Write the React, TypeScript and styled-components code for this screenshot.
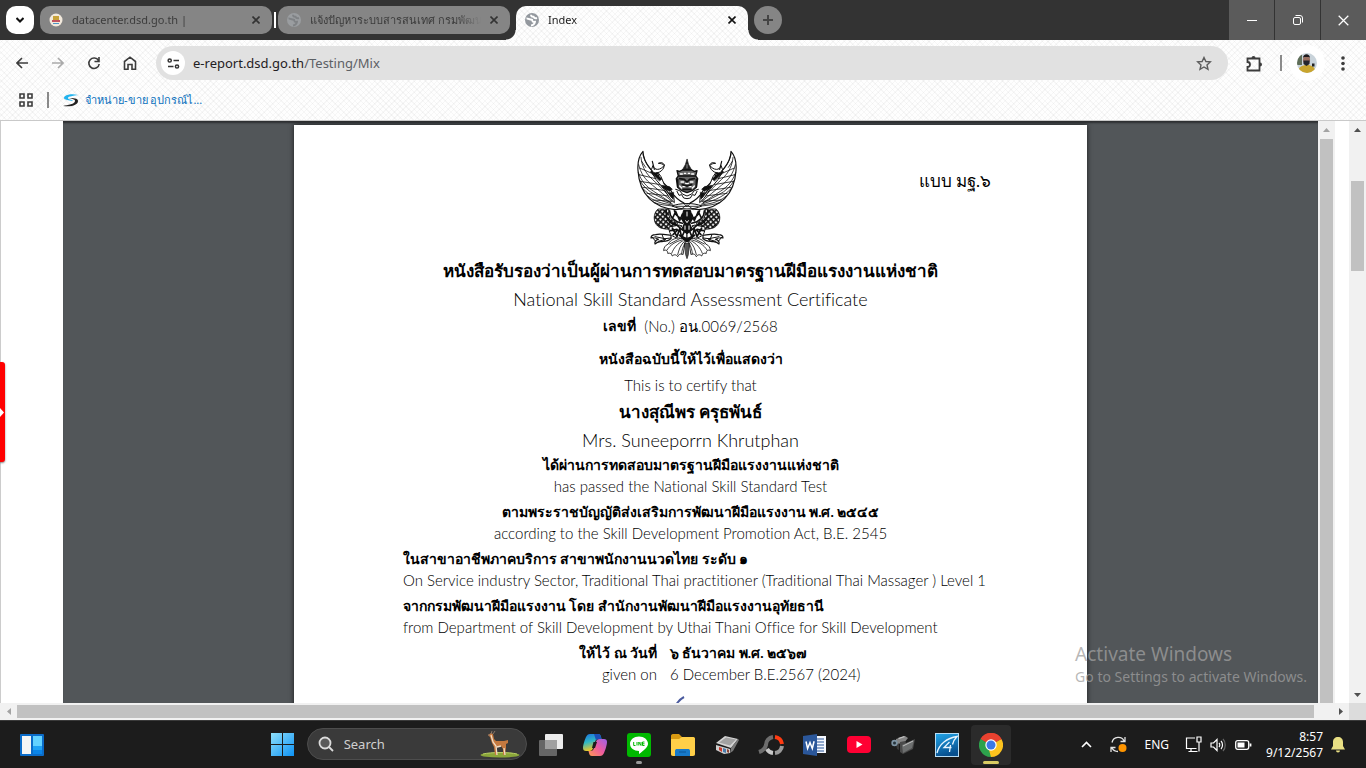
import React from 'react';
import styled, { createGlobalStyle } from 'styled-components';

const ui = `'Noto Sans', 'Open Sans', sans-serif`;
const weave = `
  background-color: #fefefe;
  background-image:
    repeating-linear-gradient(45deg, rgba(0,0,0,.03) 0 1px, transparent 1px 4px),
    repeating-linear-gradient(-45deg, rgba(0,0,0,.03) 0 1px, transparent 1px 4px);
`;

const GlobalStyle = createGlobalStyle`
  * { box-sizing: border-box; }
  body { margin: 0; background: #fff; font-family: ${ui}; }
  button { border: 0; padding: 0; background: none; font: inherit; color: inherit; }
  svg { display: block; flex: none; }
`;

const Desktop = styled.div`
  height: 100vh;
  display: flex;
  flex-direction: column;
  position: relative;
  overflow: hidden;
`;

/* ---------- tab strip ---------- */
const TabStrip = styled.header`
  height: 40px;
  flex: none;
  display: flex;
  align-items: flex-start;
  background: #333;
  padding-left: 6px;
`;
const TabSearch = styled.button`
  width: 28px;
  height: 28px;
  margin: 6px 6px 0 0;
  border-radius: 10px;
  background: #fff;
  display: grid;
  place-items: center;
`;
const Tab = styled.div<{ $active?: boolean }>`
  position: relative;
  width: 232px;
  height: ${p => (p.$active ? 34 : 28)}px;
  margin-top: 6px;
  margin-left: ${p => (p.$active ? 6 : 0)}px;
  padding: ${p => (p.$active ? '0 12px 6px 9px' : '0 12px 0 9px')};
  display: flex;
  align-items: center;
  gap: 9px;
  font-size: 11px;
  line-height: 18px;
  color: ${p => (p.$active ? '#1c1c1c' : '#3c3c3c')};
  border-radius: ${p => (p.$active ? '10px 10px 0 0' : '10px')};
  ${p => (p.$active ? weave : 'background: #858585;')}
`;
const TabFlare = styled.span<{ $side: 'left' | 'right' }>`
  position: absolute;
  bottom: 0;
  ${p => p.$side}: -10px;
  width: 10px;
  height: 10px;
  background: radial-gradient(circle at ${p => (p.$side === 'left' ? '0 0' : '100% 0')}, transparent 9px, #fdfdfd 10px);
`;
const TabTitle = styled.span`
  flex: 1;
  min-width: 0;
  overflow: hidden;
  white-space: nowrap;
  mask-image: linear-gradient(90deg, #000 85%, transparent);
`;
const TabDivider = styled.span`
  width: 2px;
  height: 16px;
  margin: 12px 2px 0;
  background: #fff;
`;
const NewTab = styled.button`
  width: 28px;
  height: 28px;
  margin: 6px 0 0 6px;
  border-radius: 50%;
  background: #858585;
  display: grid;
  place-items: center;
`;
const WindowControls = styled.div`
  margin-left: auto;
  display: flex;
  gap: 1px;
`;
const WindowButton = styled.button`
  width: 45px;
  height: 40px;
  background: #5b5b5b;
  display: grid;
  place-items: center;
`;

/* ---------- toolbar ---------- */
const Toolbar = styled.div`
  ${weave}
  height: 80px;
  flex: none;
  display: flex;
  flex-direction: column;
`;
const NavRow = styled.nav`
  height: 46px;
  display: flex;
  align-items: center;
  padding: 0 5px 0 4px;
`;
const NavButton = styled.button`
  width: 36px;
  height: 36px;
  display: grid;
  place-items: center;
`;
const Omnibox = styled.label`
  flex: 1;
  height: 34px;
  margin: 0 8px;
  padding: 0 16px 0 5px;
  border-radius: 17px;
  background: #e1e1e1;
  display: flex;
  align-items: center;
  gap: 8px;
`;
const SiteInfo = styled.button`
  width: 24px;
  height: 24px;
  border-radius: 50%;
  background: #fff;
  display: grid;
  place-items: center;
`;
const Address = styled.div`
  flex: 1;
  display: flex;
  font-size: 13px;
  line-height: 20px;
  color: #5c6064;
`;
const Host = styled.span`
  color: #1f2023;
`;
const Bar = styled.span`
  width: 2px;
  height: 16px;
  background: #8a8a8a;
  flex: none;
`;
const Profile = styled.div`
  display: flex;
  align-items: center;
  gap: 7px;
  padding-left: 8px;
`;
const Avatar = styled.button`
  width: 36px;
  height: 36px;
  border-radius: 50%;
  background: #fff;
  display: grid;
  place-items: center;
`;
const BookmarkRow = styled.div`
  height: 34px;
  display: flex;
  align-items: center;
  padding: 0 19px 6px;
  gap: 14px;
`;
const Bookmark = styled.a`
  display: flex;
  align-items: center;
  gap: 6px;
  font-size: 11px;
  line-height: 16px;
  color: #0a70bd;
  text-decoration: none;
`;

/* ---------- page ---------- */
const Page = styled.main`
  flex: 1;
  min-height: 0;
  display: flex;
  position: relative;
  border-top: 1px solid #c9c9c9;
  background: #fff;
`;
const PageEdge = styled.div`
  width: 63px;
  flex: none;
  border-left: 1px solid #ccc;
`;
const Viewer = styled.section`
  flex: 1;
  min-width: 0;
  overflow: hidden;
  background: #525659;
  box-shadow: inset 0 3px 2px -1px #2d2f31;
  padding-top: 4px;
  display: flex;
  justify-content: center;
`;
const Paper = styled.article`
  width: 793px;
  min-height: 1122px;
  flex: none;
  background: #fff;
  box-shadow: 0 0 5px rgba(0, 0, 0, .7);
  color: #000;
  font-family: Lato, 'Noto Sans', sans-serif;
  font-variant-ligatures: none;
`;
const PaperHead = styled.div`
  display: grid;
  grid-template-columns: 1fr 100px 1fr;
  align-items: start;
  padding: 25px 96px 0 89px;
  height: 132px;
`;
const FormCode = styled.div`
  grid-column: 3;
  text-align: right;
  padding-top: 18px;
  font-size: 17px;
  line-height: 26px;
`;
const EmblemBox = styled.div`
  grid-column: 2;
`;
const Line = styled.p<{ $size?: 'big' | 'mid'; $bold?: boolean; $left?: boolean }>`
  margin: 0;
  white-space: nowrap;
  text-align: ${p => (p.$left ? 'left' : 'center')};
  padding-left: ${p => (p.$left ? 109 : 0)}px;
  font-weight: ${p => (p.$bold ? 700 : 300)};
  font-size: ${p => (p.$size === 'big' ? (p.$bold ? 17 : 18) : p.$bold ? 14 : 15)}px;
  line-height: ${p => (p.$size === 'big' ? 28 : p.$size === 'mid' ? 26 : p.$bold ? 22 : 20)}px;
`;
const NumberLine = styled.div`
  display: flex;
  justify-content: center;
  gap: 8px;
  margin-bottom: 7px;
`;
const Pair = styled.div`
  margin-bottom: 5px;
`;
const DateGrid = styled.div`
  display: grid;
  grid-template-columns: 363px 1fr;
  column-gap: 13px;
  & > :nth-child(odd) { text-align: right; }
  & > :nth-child(even) { text-align: left; }
`;
const Signature = styled.div`
  padding: 12px 0 0 377px;
`;
const SideTab = styled.button`
  position: absolute;
  left: 0;
  top: 241px;
  width: 5px;
  height: 100px;
  border-radius: 0 3px 3px 0;
  background: #f00;
  box-shadow: 0 1px 2px rgba(0, 0, 0, .5);
  display: grid;
  place-items: center start;
`;
const VScroll = styled.div`
  width: 17px;
  flex: none;
  background: #f1f1f1;
  display: flex;
  flex-direction: column;
  align-items: center;
  padding-top: 7px;
`;
const VThumb = styled.div<{ $top: number; $size?: number }>`
  width: 13px;
  margin-top: ${p => p.$top}px;
  background: #c1c1c1;
  ${p => (p.$size ? `height: ${p.$size}px; margin-bottom: auto;` : 'flex: 1;')}
`;
const DownArrow = styled.div`
  padding-bottom: 6px;
`;
const Gutter = styled.div`
  width: 14px;
  flex: none;
`;
const HScroll = styled.div`
  height: 17px;
  flex: none;
  display: flex;
  align-items: center;
  background: #f1f1f1;
`;
const HArrow = styled.div`
  width: 17px;
  display: grid;
  place-items: center;
`;
const HThumb = styled.div`
  flex: 1;
  height: 13px;
  margin-right: 18px;
  background: #c1c1c1;
`;
const Corner = styled.div`
  width: 17px;
  height: 17px;
  background: #dcdcdc;
`;
const Watermark = styled.aside`
  position: absolute;
  right: 59px;
  bottom: 81px;
  color: rgba(160, 160, 160, .75);
  font-size: 14px;
  line-height: 20px;
  pointer-events: none;
`;
const WatermarkTitle = styled.div`
  font-size: 19px;
  line-height: 26px;
`;

/* ---------- taskbar ---------- */
const Taskbar = styled.footer`
  height: 48px;
  flex: none;
  display: grid;
  grid-template-columns: 17fr auto 23fr;
  align-items: center;
  background: #1c1c1c;
  border-top: 1px solid #3a3a3a;
  color: #fff;
`;
const Widgets = styled.button`
  width: 24px;
  margin-left: 20px;
`;
const Apps = styled.div`
  display: flex;
  gap: 4px;
`;
const AppButton = styled.button<{ $active?: boolean }>`
  position: relative;
  width: 40px;
  height: 40px;
  border-radius: 4px;
  display: grid;
  place-items: center;
  background: ${p => (p.$active ? '#2b2b2b' : 'transparent')};
`;
const Running = styled.span<{ $active?: boolean }>`
  position: absolute;
  bottom: 1px;
  left: 50%;
  transform: translateX(-50%);
  width: ${p => (p.$active ? 16 : 6)}px;
  height: 3px;
  border-radius: 2px;
  background: ${p => (p.$active ? '#d9cb63' : '#9a9a9a')};
`;
const SearchBox = styled.label`
  width: 220px;
  height: 32px;
  margin-top: 3px;
  border-radius: 16px;
  border: 1px solid #4d4d4d;
  background: #3a3a3a;
  display: flex;
  align-items: center;
  padding: 0 6px 0 10px;
`;
const SearchInput = styled.input`
  flex: 1;
  min-width: 0;
  margin-left: 8px;
  border: 0;
  outline: 0;
  background: transparent;
  font: 13px ${ui};
  &::placeholder { color: #cfcfcf; opacity: 1; }
`;
const Tray = styled.div`
  display: flex;
  align-items: center;
  justify-content: flex-end;
  padding-right: 21px;
  font-size: 12px;
  line-height: 16px;
`;
const TrayItem = styled.button<{ $gap: number }>`
  margin-right: ${p => p.$gap}px;
`;
const Clock = styled.div`
  text-align: right;
  margin-right: 8px;
`;

/* ---------- drawings ---------- */
const Cross = ({ color, size = 8 }: { color: string; size?: number }) => (
  <svg width={size} height={size} viewBox="0 0 8 8" stroke={color} strokeWidth={size > 8 ? 0.9 : 1.6}>
    <path d="M.5 .5l7 7M7.5 .5l-7 7" />
  </svg>
);
const Globe = ({ tone, land = '#fff' }: { tone: string; land?: string }) => (
  <svg width="14" height="14" viewBox="0 0 14 14">
    <circle cx="7" cy="7" r="7" fill={tone} />
    <path d="M1.500 5.500C3 5.200 4 6.800 6 6.500c1 0 1.500.5 1.500 1.500s1.500 1 2.500.8c0 1.700-2 3.500-4 3.700M6 1.800c0 1.700 1 2 2.500 1.900C9 5 10.500 5.500 12 5" fill="none" stroke={land} strokeWidth="1.900" />
  </svg>
);
const Triangle = ({ dir, color }: { dir: 'up' | 'down' | 'left' | 'right'; color: string }) => {
  const d = { up: 'M0 4L3.500 0L7 4z', down: 'M0 0h7L3.500 4z', left: 'M4 0v7L0 3.500z', right: 'M0 0v7l4-3.500z' }[dir];
  const flat = dir === 'up' || dir === 'down';
  return (
    <svg width={flat ? 7 : 4} height={flat ? 4 : 7} fill={color}>
      <path d={d} />
    </svg>
  );
};

const Wing = () => (
  <g>
    <path d="M70 34C59 46 53 66 55 92c2 30 12 62 34 84 18 18 44 30 78 33l32-4-6-16c-22-10-32-24-42-38-18-24-44-46-60-66C82 74 70 54 70 34z" fill="#fff" strokeWidth="3.500" />
    <path d="M64 52c2 24 12 46 34 66s40 40 62 62M57 74c6 26 20 46 42 62 20 16 38 32 58 48M56 98c8 24 24 42 46 56 18 12 34 22 52 34M61 122c10 18 26 32 46 42 16 8 30 16 46 24M70 146c12 14 28 24 46 32 14 6 28 10 42 14M84 168c14 12 30 18 46 22l44 8M104 188c16 6 34 8 56 10M70 42c4 20 12 36 30 54M78 82l-12-18M92 98L60 84M108 116L58 104M122 134L62 124M138 152L70 142M148 168L82 160M158 184L100 180" strokeWidth="2.400" />
    {/* raised arm with the curled hand */}
    <path d="M96 94l18 2 10 14 10 24 14 8 14 24 2 22-14-14-18-28-22-26z" fill="#fff" strokeWidth="3" />
    <path d="M92 96l16-8 8 6-4 10 14 14-6 4zM126 136l24 4 8 8-8 6-20-10zM148 158l12 20 2-20z" fill="#111" strokeWidth="2" />
    <path d="M100 78c4 14 22 14 34-2-6-4-10-6-18-6 8-4 14-2 18 4 0 14-14 28-32 24l-6-8z" fill="#fff" strokeWidth="3" />
    <path d="M98 64l6 24M106 102l18 14M112 98l6 10M136 146l20 26" strokeWidth="3.500" />
  </g>
);
const LowerSide = () => (
  <g>
    <path d="M114 208c-14 12-14 38 0 50 10 10 30 10 52 10l8-20c-22-6-30-22-26-40z" fill="url(#scales)" strokeWidth="2.500" />
    <path d="M140 210c-4 26 10 46 46 48M150 212c0 18 14 32 38 38M164 212c2 12 10 20 26 26M160 232l8-18 12 28 8-20" fill="none" strokeWidth="4.500" />
    <path d="M148 262c0 12 2 20 10 26l18 8 26-2v-22l-22-16z" fill="#fff" strokeWidth="3" />
    <path d="M158 264l14 26 8-24 6 26 10-22M166 250l20 18M152 272l20-4M160 284l14-14" strokeWidth="5" fill="none" />
    <path d="M154 286c-16-2-34-6-46-2-8 0-14 4-14 10 10-2 16 0 22 4-8 2-12 8-10 14 8-8 14-6 24-8 8 0 18-2 24-8z" fill="#fff" strokeWidth="3.500" />
    <path d="M106 290l30 6 18-2M116 304l22-6M98 292l10 12M128 286l6 16" strokeWidth="3" fill="none" />
    <path d="M176 294c-18 2-26 10-30 18-10 4-14 12-14 20 8-4 12 0 12 8 8-2 12 2 14 8 6-6 12-4 16 2 4-8 10-10 16-6l8-46z" fill="#fff" strokeWidth="2.600" />
    <path d="M186 300c-20 6-34 14-44 30M190 302c-18 10-28 22-34 38M194 304c-12 12-16 24-20 40M180 296l-30 16M196 308c-6 12-10 24-10 34" strokeWidth="2.400" fill="none" />
  </g>
);
const Emblem = () => (
  <svg width="100" height="110" viewBox="52 30 300 330" fill="none" stroke="#111" strokeLinecap="round" strokeLinejoin="round" role="img" aria-label="Garuda emblem">
    <defs>
      <pattern id="scales" width="11" height="11" patternUnits="userSpaceOnUse" patternTransform="rotate(40)">
        <rect width="11" height="11" fill="#111" stroke="none" />
        <rect x="2" y="2" width="6" height="6" fill="#fff" stroke="none" />
      </pattern>
    </defs>
    <LowerSide />
    <g transform="translate(404 0) scale(-1 1)"><LowerSide /></g>
    <path d="M196 310h12l-2 34-4 12-4-12z" fill="#555" strokeWidth="2" />
    <Wing />
    <g transform="translate(404 0) scale(-1 1)"><Wing /></g>
    <path d="M158 198c22-10 66-10 88 0-22 12-66 12-88 0z" fill="#fff" strokeWidth="3" />
    <path d="M168 199h68M192 190l10 10 10-10M184 208l18-14 18 14" strokeWidth="2.500" />
    <path d="M192 212h20l6 24-8 14 6 20-14 10-14-10 6-20-8-14z" fill="#111" strokeWidth="4" />
    <path d="M202 216v12M196 258v10M208 258v10M198 242l4 6 4-6" stroke="#fff" strokeWidth="3" />
    <path d="M180 286l22 12 22-12M190 296l12 8 12-8" strokeWidth="6" />
    <path d="M202 58l-5 16-9 16h28l-9-16z" fill="#222" strokeWidth="2" />
    <path d="M202 74v10" stroke="#ccc" strokeWidth="2" />
    <path d="M180 94l8-4h28l8 4 8-2-4 16 6 8-4 26-12 10-16 6-16-6-12-10-4-26 6-8-4-16z" fill="#666" strokeWidth="4" />
    <path d="M182 102h6M194 100h4M206 100h4M216 102h6M184 126h8M212 126h8M190 140h6M208 140h6M198 130h8M180 138l6 6M224 138l-6 6" stroke="#fff" strokeWidth="4" />
    <path d="M178 108h48M180 116l14 2 8 8 8-8 14-2M188 134l14 4 14-4M190 148h24M174 118v22M230 118v22" strokeWidth="5" />
    <path d="M168 148l12 4 8 10 14 6 14-6 8-10 12-4M172 154l6 12 8-2 6 10 10 2 10-2 6-10 8 2 6-12" strokeWidth="3" />
  </svg>
);

const Guanaco = () => (
  <svg width="40" height="28" viewBox="0 0 40 28">
    <ellipse cx="20" cy="25" rx="19.500" ry="2.600" fill="#8aa63a" />
    <path d="M3 24c8-2 26-2 34 0" stroke="#b9cf66" fill="none" />
    <path d="M8 5l3-2 2 1 1 5 2 2h8l4-1v3l-2 1v4l-1 7h-2v-6l-2-3-4 1v8h-2l-1-8-2-4-2-6z" fill="#c5793f" />
    <path d="M11 5l2 7 3 4 1 9M24 18l1 7M17 17l4-1" fill="none" stroke="#f1dcc4" strokeWidth="1.300" />
    <path d="M11 4l1-3M13 4l2-3M8 5h2" stroke="#8b7668" fill="none" />
  </svg>
);

const apps: { name: string; art: React.ReactNode; running?: boolean; active?: boolean }[] = [
  {
    name: 'Task view',
    art: (
      <svg width="24" height="22" viewBox="0 0 24 22">
        <rect x="6" width="18" height="15" rx="1" fill="#ececec" />
        <rect y="6" width="18" height="16" rx="1" fill="#666" />
        <path d="M6 6h12v9H6z" fill="#a0a0a0" />
      </svg>
    ),
  },
  {
    name: 'Copilot',
    art: (
      <svg width="24" height="22" viewBox="0 0 24 22">
        <defs>
          <linearGradient id="cpA" x2="0.300" y2="1"><stop stopColor="#1b6fe0" /><stop offset=".5" stopColor="#2fb7c4" /><stop offset="1" stopColor="#f3c722" /></linearGradient>
          <linearGradient id="cpB" x1="1" x2="0" y2="1"><stop stopColor="#9a62e8" /><stop offset=".5" stopColor="#ee5b9f" /><stop offset="1" stopColor="#ff9a50" /></linearGradient>
        </defs>
        <path d="M7 0h8c2 0 2.500 1 3 3l.5 2h-3c-2 0-3 1-3.500 3l-2 6c-.5 2-1.500 3-3.500 3H3c-2 0-3-1-3-3 0-3 2-9 3-11S5 0 7 0z" fill="url(#cpA)" />
        <path d="M17 22H9c-2 0-2.500-1-3-3l-.5-2h2c2 0 3-1 3.500-3l2-6c.5-2 1.500-3 3.500-3H21c2 0 3 1 3 3 0 3-2 9-3 11s-2 3-4 3z" fill="url(#cpB)" />
        <path d="M15 0c2 0 2.500 1 3 3l.5 2h-3c-1 0-2 .4-2.600 1L11 0z" fill="#1c4fb8" />
        <path d="M10.500 8h3.500l-2 6H9z" fill="#1c1c1c" />
      </svg>
    ),
  },
  {
    name: 'LINE',
    running: true,
    art: (
      <svg width="24" height="24" viewBox="0 0 24 24">
        <rect width="24" height="24" rx="3" fill="#00b900" />
        <path d="M12 3.500c5 0 9 3.200 9 7.300 0 3.500-4 6.700-9 10.200v-3C7 18 3 15 3 10.800s4-7.300 9-7.300z" fill="#fff" />
        <path d="M6.700 9v3.500h1.800M10 9v3.500M11.800 12.500V9l2.200 3.500V9M17.500 9h-2v3.500h2M15.500 10.800h2" fill="none" stroke="#00b900" strokeWidth="1" />
      </svg>
    ),
  },
  {
    name: 'File Explorer',
    art: (
      <svg width="24" height="22" viewBox="0 0 24 22">
        <path d="M0 2c0-1 .5-2 2-2h6l3 3h11c1.500 0 2 1 2 2v4H0z" fill="#d99a12" />
        <path d="M0 5h8l3-2h11c1.500 0 2 1 2 2v15c0 1-.5 2-2 2H2c-1.500 0-2-1-2-2z" fill="#ffcf48" />
        <path d="M4 22v-5c0-1.500 1-2 2-2h11c1 0 2 .5 2 2v5z" fill="#1779c9" />
        <path d="M8 18h7" stroke="#0b5699" />
      </svg>
    ),
  },
  {
    name: 'Scanner',
    art: (
      <svg width="24" height="18" viewBox="0 0 24 18">
        <path d="M1 7l9-7 13 3-7 9z" fill="#d4d4d4" />
        <path d="M4 6.500l7-5 10 2-6 6z" fill="#a2a2a2" />
        <path d="M16 12l7-9 1 1-6 11-3 2z" fill="#777" />
        <path d="M1 9l14 4v4l-6 1-8-4z" fill="#cfcfcf" />
        <path d="M4 11l3 1v4l-3-2z" fill="#ca3a2b" /><path d="M8 12l3 1v4l-3-1z" fill="#4a7bab" /><path d="M12 13l2 1v3l-2-1z" fill="#8a4438" />
      </svg>
    ),
  },
  {
    name: 'Magnifier',
    art: (
      <svg width="26" height="22" viewBox="0 0 26 22" fill="none" strokeWidth="4">
        <path d="M17 3a8 8 0 0 1 7 7" stroke="#ff3b12" />
        <path d="M24 12a8 8 0 0 1-7 7" stroke="#9a9a9a" />
        <path d="M15 19a8 8 0 0 1-6-4" stroke="#c8c8c8" />
        <path d="M15 3a8 8 0 0 0-7 8c-1 4-4 6-7 7" stroke="#6e6e6e" />
      </svg>
    ),
  },
  {
    name: 'Word',
    art: (
      <svg width="23" height="22" viewBox="0 0 23 22">
        <path d="M12 2h11v17H12z" fill="#f5f8ff" />
        <path d="M14 5h7M14 8h7M14 11h7M14 14h7M14 17h7" stroke="#2b579a" strokeWidth="1.200" />
        <path d="M0 2l14-2v22L0 20z" fill="#2b579a" />
        <path d="M3 7.500l1.600 7L7 8.500l2.300 6 1.800-7.300" fill="none" stroke="#fff" strokeWidth="1.500" />
      </svg>
    ),
  },
  {
    name: 'YouTube',
    art: (
      <svg width="24" height="17" viewBox="0 0 24 17">
        <rect width="24" height="17" rx="4" fill="#ff0033" />
        <path d="M9.500 5l6 3.500-6 3.500z" fill="#fff" />
      </svg>
    ),
  },
  {
    name: 'Camera',
    art: (
      <svg width="24" height="18" viewBox="0 0 24 18">
        <path d="M5 3l9-3 3 2-4 5-8 1z" fill="#858585" />
        <path d="M7 2l6-2 1 1-6 2z" fill="#c4c4c4" />
        <path d="M9 6l5-1 1 2 9-4-2 10-10 5-3-2z" fill="#4a4a4a" />
        <path d="M11 9l12-5-2 8-9 5z" fill="#6d6f6f" />
        <path d="M12 10l10-5" stroke="#c0c0c0" />
        <path d="M5 8l3 0v6l-2-1z" fill="#3a3a3a" />
        <circle cx="3.500" cy="7" r="3.200" fill="#7d93a3" /><circle cx="3.500" cy="7" r="1.500" fill="#27343c" />
      </svg>
    ),
  },
  {
    name: 'Navigator',
    art: (
      <svg width="24" height="24" viewBox="0 0 24 24">
        <defs><linearGradient id="nav" x2="0.300" y2="1"><stop stopColor="#22a6ea" /><stop offset="1" stopColor="#07508f" /></linearGradient></defs>
        <rect x=".5" y=".5" width="23" height="23" fill="url(#nav)" stroke="#b7ddf5" />
        <path d="M2 20C4 11 12 5 22 3.500c-3 3-4 6-4.500 8M14.500 9L9 14.500h7.500M15.500 12l-1 7" fill="none" stroke="#e8f5ff" strokeWidth="1.300" />
      </svg>
    ),
  },
  {
    name: 'Google Chrome',
    running: true,
    active: true,
    art: (
      <svg width="24" height="24" viewBox="0 0 24 24">
        <path d="M12 12L1.600 6A12 12 0 0 1 22.400 6z" fill="#e8412f" />
        <path d="M12 12L22.400 6A12 12 0 0 1 12 24z" fill="#fcc31e" />
        <path d="M12 12v12A12 12 0 0 1 1.600 6z" fill="#2da24c" />
        <path d="M1.600 6A12 12 0 0 1 22.700 6.500H12L6.800 9z" fill="#e8412f" />
        <path d="M1.600 6l5.300 9 3-3z" fill="#2da24c" /><path d="M17.200 15L12 24l-2-7z" fill="#fcc31e" />
        <circle cx="12" cy="12" r="5.700" fill="#fff" /><circle cx="12" cy="12" r="4.500" fill="#3b78e7" />
      </svg>
    ),
  },
];

const stroke = { fill: 'none', stroke: '#3c3c3c', strokeWidth: 1.6 } as const;

export default function App() {
  return (
    <>
      <GlobalStyle />
      <Desktop>
        <TabStrip>
          <TabSearch aria-label="Search tabs">
            <svg width="8" height="6" fill="none" stroke="#111" strokeWidth="2"><path d="M.5 1L4 4.500 7.500 1" /></svg>
          </TabSearch>
          <Tab>
            <svg width="14" height="14" viewBox="0 0 14 14">
              <circle cx="7" cy="7" r="6.500" fill="#f2e9dc" />
              <path d="M4 3h6v4H4z" fill="#c7a23a" /><path d="M3 7h8v2H3z" fill="#c2555f" /><path d="M4 10h6v1H4z" fill="#4f96c4" />
            </svg>
            <TabTitle>datacenter.dsd.go.th |</TabTitle>
            <button aria-label="Close tab"><Cross color="#333" /></button>
          </Tab>
          <TabDivider />
          <Tab>
            <Globe tone="#9a9da0" land="#7f8285" />
            <TabTitle>แจ้งปัญหาระบบสารสนเทศ กรมพัฒน</TabTitle>
            <button aria-label="Close tab"><Cross color="#333" /></button>
          </Tab>
          <Tab $active>
            <TabFlare $side="left" />
            <TabFlare $side="right" />
            <Globe tone="#93989e" />
            <TabTitle>Index</TabTitle>
            <button aria-label="Close tab"><Cross color="#111" /></button>
          </Tab>
          <NewTab aria-label="New tab">
            <svg width="10" height="10" stroke="#444" strokeWidth="2"><path d="M5 0v10M0 5h10" /></svg>
          </NewTab>
          <WindowControls>
            <WindowButton aria-label="Minimize"><svg width="10" height="1"><path d="M0 .5h10" stroke="#fff" /></svg></WindowButton>
            <WindowButton aria-label="Restore">
              <svg width="10" height="10" fill="none" stroke="#fff"><rect x=".5" y="2.500" width="7" height="7" rx="1.500" /><path d="M2.500.5H7A2.500 2.500 0 0 1 9.500 3v4.500" /></svg>
            </WindowButton>
            <WindowButton aria-label="Close"><Cross color="#fff" size={11} /></WindowButton>
          </WindowControls>
        </TabStrip>

        <Toolbar>
          <NavRow>
            <NavButton aria-label="Back"><svg width="12" height="12" {...stroke}><path d="M12 6H1M6 1L1 6l5 5" /></svg></NavButton>
            <NavButton aria-label="Forward"><svg width="12" height="12" {...stroke} stroke="#aaa"><path d="M0 6h11M6 1l5 5-5 5" /></svg></NavButton>
            <NavButton aria-label="Reload"><svg width="14" height="14" {...stroke}><path d="M11.500 4.500A5.200 5.200 0 1 0 12.200 8M12 1v4.500H7.500" /></svg></NavButton>
            <NavButton aria-label="Home"><svg width="14" height="14" {...stroke}><path d="M1.500 5.500L7 1.200l5.500 4.300v7.700H9V8.500H5v4.700H1.500z" /></svg></NavButton>
            <Omnibox>
              <SiteInfo aria-label="Site information">
                <svg width="13" height="11" fill="none" stroke="#333" strokeWidth="1.500"><circle cx="2.700" cy="2.500" r="1.600" /><path d="M6.500 2.500H12M1 8.500h5.500" /><circle cx="10" cy="8.500" r="1.600" /></svg>
              </SiteInfo>
              <Address><Host>e-report.dsd.go.th</Host>/Testing/Mix</Address>
              <svg width="16" height="15" viewBox="0 0 16 15" fill="none" stroke="#5c5c5c" strokeWidth="1.400"><path d="M8 1.500l1.900 4 4.400.4-3.300 3 1 4.400L8 11l-4 2.300 1-4.400-3.300-3 4.400-.4z" /></svg>
            </Omnibox>
            <NavButton aria-label="Extensions">
              <svg width="17" height="17" viewBox="0 0 17 17" {...stroke} strokeWidth="1.800"><path d="M1.500 3.500h12v12h-12v-3.500a2.200 2.200 0 0 0 0-5z" /><path d="M5.500 3a2 2 0 0 1 4 0zM14 7.500a2 2 0 0 1 0 4z" fill="#3c3c3c" stroke="none" /></svg>
            </NavButton>
            <Profile>
              <Bar />
              <Avatar aria-label="Profile">
                <svg width="20" height="20" viewBox="0 0 20 20">
                  <defs><clipPath id="face"><circle cx="10" cy="10" r="10" /></clipPath></defs>
                  <g clipPath="url(#face)">
                    <path d="M0 0h20v20H0z" fill="#c9d3da" /><path d="M0 0h5v12H0z" fill="#5f6e58" /><path d="M1 20c0-6 4-8 9-8s8 2 9 8z" fill="#c9a52e" />
                    <ellipse cx="9.500" cy="7" rx="3.600" ry="4.600" fill="#9a7060" /><path d="M6 5c0-5 7-5 7 0l-1-1H7z" fill="#1d1b1d" /><path d="M6.500 7.500h6v3.500l-3 2-3-2z" fill="#24252c" /><path d="M15 10.500h2.500v3H15z" fill="#222" />
                  </g>
                </svg>
              </Avatar>
            </Profile>
            <NavButton aria-label="Menu"><svg width="4" height="15" fill="#3c3c3c"><circle cx="2" cy="2" r="1.800" /><circle cx="2" cy="7.500" r="1.800" /><circle cx="2" cy="13" r="1.800" /></svg></NavButton>
          </NavRow>
          <BookmarkRow>
            <svg width="14" height="14" fill="none" stroke="#3c3c3c" strokeWidth="1.600"><path d="M1 1h4v4H1zM9 1h4v4H9zM1 9h4v4H1zM9 9h4v4H9z" /></svg>
            <Bar />
            <Bookmark href="#">
              <svg width="16" height="13" viewBox="0 0 16 13"><path d="M15 1C8-1 1 1 1 4c0 2 5 2 9 3-1-2-5-1-5-3s6-2 10-3z" fill="#22b3ee" /><path d="M0 12c9 1 15-1 15-5 0-3-5-3-9-3 3 1 6 1 6 3 0 3-7 4-12 5z" fill="#222" /></svg>
              จำหน่าย-ขาย อุปกรณ์ไ...
            </Bookmark>
          </BookmarkRow>
        </Toolbar>

        <Page>
          <PageEdge />
          <Viewer>
            <Paper>
              <PaperHead>
                <EmblemBox><Emblem /></EmblemBox>
                <FormCode>แบบ มฐ.๖</FormCode>
              </PaperHead>
              <Line $size="big" $bold>หนังสือรับรองว่าเป็นผู้ผ่านการทดสอบมาตรฐานฝีมือแรงงานแห่งชาติ</Line>
              <Line $size="big">National Skill Standard Assessment Certificate</Line>
              <NumberLine>
                <Line as="span" $size="mid" $bold>เลขที่</Line>
                <Line as="span" $size="mid">(No.) อน.0069/2568</Line>
              </NumberLine>
              <Line $size="mid" $bold>หนังสือฉบับนี้ให้ไว้เพื่อแสดงว่า</Line>
              <Line $size="mid">This is to certify that</Line>
              <Line $size="big" $bold>นางสุณีพร ครุธพันธ์</Line>
              <Line $size="big">Mrs. Suneeporrn Khrutphan</Line>
              <Pair>
                <Line $bold>ได้ผ่านการทดสอบมาตรฐานฝีมือแรงงานแห่งชาติ</Line>
                <Line>has passed the National Skill Standard Test</Line>
              </Pair>
              <Pair>
                <Line $bold>ตามพระราชบัญญัติส่งเสริมการพัฒนาฝีมือแรงงาน พ.ศ. ๒๕๔๕</Line>
                <Line>according to the Skill Development Promotion Act, B.E. 2545</Line>
              </Pair>
              <Pair>
                <Line $left $bold>ในสาขาอาชีพภาคบริการ สาขาพนักงานนวดไทย ระดับ ๑</Line>
                <Line $left>On Service industry Sector, Traditional Thai practitioner (Traditional Thai Massager ) Level 1</Line>
              </Pair>
              <Pair>
                <Line $left $bold>จากกรมพัฒนาฝีมือแรงงาน โดย สำนักงานพัฒนาฝีมือแรงงานอุทัยธานี</Line>
                <Line $left>from Department of Skill Development by Uthai Thani Office for Skill Development</Line>
              </Pair>
              <DateGrid>
                <Line $bold>ให้ไว้ ณ วันที่</Line>
                <Line $bold>๖ ธันวาคม พ.ศ. ๒๕๖๗</Line>
                <Line>given on</Line>
                <Line>6 December B.E.2567 (2024)</Line>
              </DateGrid>
              <Signature>
                <svg width="40" height="30" fill="none" stroke="#4a5a9e" strokeWidth="2"><path d="M13 1C9 3 6 6 2 14c-1 6 4 8 10 2" /></svg>
              </Signature>
            </Paper>
          </Viewer>
          <VScroll>
            <Triangle dir="up" color="#a3a3a3" />
            <VThumb $top={7} />
          </VScroll>
          <Gutter />
          <VScroll>
            <Triangle dir="up" color="#505050" />
            <VThumb $top={49} $size={90} />
            <DownArrow><Triangle dir="down" color="#505050" /></DownArrow>
          </VScroll>
          <SideTab aria-label="Open side panel">
            <svg width="4" height="9" fill="#fff"><path d="M0 0l4 4.500L0 9z" /></svg>
          </SideTab>
        </Page>
        <HScroll>
          <HArrow><Triangle dir="left" color="#a3a3a3" /></HArrow>
          <HThumb />
          <HArrow><Triangle dir="right" color="#505050" /></HArrow>
          <Corner />
        </HScroll>

        <Taskbar>
          <Widgets aria-label="Widgets">
            <svg width="24" height="22" viewBox="0 0 24 22">
              <rect width="24" height="22" rx="1" fill="#0b6cc9" />
              <path d="M2 2h9v18H2z" fill="#f5f5f5" /><path d="M13 2h9v10h-9z" fill="#63d2ff" /><path d="M13 12h9v4h-9z" fill="#1ea2f5" /><path d="M13 16h9v4h-9z" fill="#0a84e8" />
            </svg>
          </Widgets>
          <Apps>
            <AppButton aria-label="Start">
              <svg width="23" height="23" viewBox="0 0 23 23">
                <defs><linearGradient id="win" gradientUnits="userSpaceOnUse" x1="0" y1="0" x2="23" y2="23"><stop stopColor="#8fe0fb" /><stop offset="1" stopColor="#0d92f4" /></linearGradient></defs>
                <path d="M0 0h11v11H0zM12 0h11v11H12zM0 12h11v11H0zM12 12h11v11H12z" fill="url(#win)" />
              </svg>
            </AppButton>
            <SearchBox>
              <svg width="16" height="16" fill="none" stroke="#dcdcdc" strokeWidth="1.800"><circle cx="7" cy="7" r="5.500" fill="#5a5a5a" /><path d="M11 11l4 4" /></svg>
              <SearchInput placeholder="Search" aria-label="Search" />
              <Guanaco />
            </SearchBox>
            {apps.map(a => (
              <AppButton key={a.name} aria-label={a.name} $active={a.active}>
                {a.art}
                {a.running && <Running $active={a.active} />}
              </AppButton>
            ))}
          </Apps>
          <Tray>
            <TrayItem $gap={18} aria-label="Show hidden icons"><svg width="11" height="7" fill="none" stroke="#fff" strokeWidth="1.600"><path d="M1 6l4.500-4.500L10 6" /></svg></TrayItem>
            <TrayItem $gap={16} aria-label="Update">
              <svg width="18" height="17" viewBox="0 0 18 17" fill="none" stroke="#e4e4e4" strokeWidth="1.300"><path d="M2 6.500C3.500 0 12 0 14 5M15 1v4.500h-4.500M1 16v-4.500h4.500M2 12c1 2 3 3.500 6 3.500" /><circle cx="12.500" cy="12" r="4" fill="#ff9500" stroke="none" /></svg>
            </TrayItem>
            <TrayItem $gap={16}>ENG</TrayItem>
            <TrayItem $gap={8} aria-label="Network">
              <svg width="17" height="17" viewBox="0 0 17 17" fill="none" stroke="#fff" strokeWidth="1.200"><path d="M10 2H1.500v10.500h10M6 12.500V15.500M3.500 15.500h9M12 1h4v5h-4zM14 6v9.500" /></svg>
            </TrayItem>
            <TrayItem $gap={8} aria-label="Volume">
              <svg width="17" height="14" viewBox="0 0 17 14" fill="none" stroke="#fff" strokeWidth="1.200"><path d="M1 5h2.500L7 1.500v11L3.500 9H1zM9 5c1 1 1 3 0 4" /><path d="M11 3c2 2 2 6 0 8" /><path d="M13 1c3 3 3 9 0 12" stroke="#666" /></svg>
            </TrayItem>
            <TrayItem $gap={14} aria-label="Battery">
              <svg width="17" height="10" viewBox="0 0 17 10" fill="none" stroke="#fff" strokeWidth="1.300"><rect x=".7" y=".7" width="13" height="8.600" rx="2" /><path d="M2.500 2.500h7v5h-7z" fill="#fff" stroke="none" /><path d="M15.500 3.500v3" strokeWidth="1.800" /></svg>
            </TrayItem>
            <Clock>8:57<br />9/12/2567</Clock>
            <svg width="14" height="16" viewBox="0 0 14 16" fill="#e9df83"><path d="M7 0c3 0 5 2 5 5v4l2 3.500H0L2 9V5c0-3 2-5 5-5zM5 13.500h4a2 2 0 0 1-4 0z" /></svg>
          </Tray>
        </Taskbar>
        <Watermark>
          <WatermarkTitle>Activate Windows</WatermarkTitle>
          Go to Settings to activate Windows.
        </Watermark>
      </Desktop>
    </>
  );
}
